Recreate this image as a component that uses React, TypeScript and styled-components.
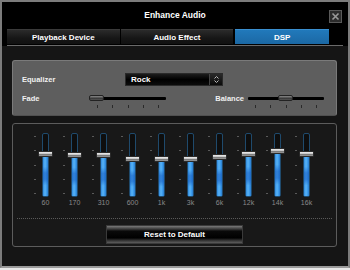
import React from "react";
import styled, { createGlobalStyle } from "styled-components";

const Global = createGlobalStyle`
  html, body { margin: 0; padding: 0; background: #e8e8e8; }
  body { font-family: "Liberation Sans", Arial, sans-serif; }
  * { box-sizing: border-box; }
`;

const Window = styled.div`
  width: 350px;
  height: 268px;
  background: #151515;
  border: 2px solid #7c7c7c;
  border-bottom-color: #9a9a9a;
  display: flex;
  flex-direction: column;
`;

const Header = styled.div`
  background: #000;
  padding: 0 5px 0 5px;
`;

const TitleBar = styled.div`
  height: 25px;
  position: relative;
  display: flex;
  align-items: center;
  justify-content: center;
  color: #fff;
  font-weight: bold;
  font-size: 8.5px;
`;

const CloseBtn = styled.div`
  position: absolute;
  right: 1px;
  top: 8px;
  width: 13px;
  height: 13px;
  background: #2c2c2c;
  border: 1px solid #5a5a5a;
  display: flex;
  align-items: center;
  justify-content: center;
`;

const Tabs = styled.div`
  display: flex;
  gap: 1px;
  padding-top: 2px;
  padding-bottom: 1px;
  padding-right: 14px;
  border-bottom: 1px solid #6a6a6a;
`;

const Tab = styled.div<{ $active?: boolean }>`
  width: ${(p) => (p.$active ? "94px" : "113px")};
  margin-left: ${(p) => (p.$active ? "1px" : "0")};
  height: 15px;
  display: flex;
  align-items: center;
  justify-content: center;
  color: #fff;
  font-weight: bold;
  font-size: 8px;
  background: ${(p) =>
    p.$active
      ? "linear-gradient(#2179bb, #1b68a4)"
      : "linear-gradient(#2b2b2b, #161616 60%, #111)"};
  border-top: 1px solid ${(p) => (p.$active ? "#3a8fd0" : "#3a3a3a")};
`;

const Body = styled.div`
  flex: 1;
  padding: 14px 11px 0 10px;
  display: flex;
  flex-direction: column;
  gap: 7px;
`;

const SettingsPanel = styled.div`
  height: 56px;
  background: #5e5e5e;
  border: 1px solid #7a7a7a;
  border-bottom-color: #505050;
  border-radius: 3px;
  padding: 12px 12px 0 9px;
  display: flex;
  flex-direction: column;
  gap: 6px;
`;

const Row = styled.div`
  display: flex;
  align-items: flex-start;
`;

const Label = styled.div<{ $w?: number }>`
  width: ${(p) => (p.$w ? `${p.$w}px` : "auto")};
  color: #f0f0f0;
  font-weight: bold;
  font-size: 7.5px;
  line-height: 13px;
  flex-shrink: 0;
`;

const Select = styled.div`
  width: 98px;
  height: 13px;
  display: flex;
  background: linear-gradient(#1c1c1c, #000 50%, #0c0c0c);
  border: 1px solid #2a2a2a;
`;

const SelectText = styled.div`
  flex: 1;
  color: #fff;
  font-weight: bold;
  font-size: 8px;
  line-height: 11px;
  padding-left: 5px;
`;

const SelectArrow = styled.div`
  width: 13px;
  border-left: 1px solid #444;
  display: flex;
  align-items: center;
  justify-content: center;
  background: linear-gradient(#2a2a2a, #0a0a0a);
`;

const Spacer = styled.div`
  flex: 1;
`;

const HSlider = styled.div`
  width: 76px;
  display: flex;
  flex-direction: column;
  padding-top: 5px;
`;

const HTrack = styled.div`
  height: 3px;
  background: #000;
  border-radius: 1px;
  position: relative;
`;

const HThumb = styled.div`
  position: absolute;
  top: -2px;
  width: 15px;
  height: 6px;
  border-radius: 2px;
  background: linear-gradient(#8a8a8a, #3a3a3a 60%, #555);
  border: 1px solid #222;
`;

const HTicks = styled.div`
  display: flex;
  justify-content: space-between;
  padding: 0 7px;
  margin-top: 5px;
`;

const HTick = styled.div`
  width: 1px;
  height: 3px;
  background: #2a2a2a;
`;

const EqPanel = styled.div`
  height: 124px;
  border: 1px solid #5c5c5c;
  border-radius: 3px;
  background: #181818;
  padding: 9px 3px 0 3px;
  display: flex;
  flex-direction: column;
  align-items: stretch;
`;

const Bands = styled.div`
  display: grid;
  grid-template-columns: repeat(10, 29px);
  padding-left: 15px;
`;

const Band = styled.div`
  display: flex;
  flex-direction: column;
  align-items: center;
`;

const SliderArea = styled.div`
  height: 64px;
  width: 29px;
  position: relative;
  display: flex;
  justify-content: center;
`;

const Ticks = styled.div`
  position: absolute;
  left: 3px;
  top: 3px;
  bottom: 3px;
  display: flex;
  flex-direction: column;
  justify-content: space-between;
`;

const Tick = styled.div`
  width: 2px;
  height: 1px;
  background: #5a5a5a;
`;

const VTrack = styled.div`
  width: 7px;
  height: 64px;
  background: #0e0e0e;
  border: 1px solid #1f4a6c;
  border-radius: 2px;
  position: relative;
  overflow: visible;
`;

const VFill = styled.div`
  position: absolute;
  left: 0;
  right: 0;
  bottom: 0;
  background:
    linear-gradient(to bottom, transparent 30%, rgba(20, 90, 190, 0.55) 45%, rgba(20, 90, 190, 0.55) 60%, transparent 75%),
    linear-gradient(to right, #2f8ae0, #5ab4f5 40%, #3d9ced 70%, #2a7ccc);
`;

const VThumb = styled.div`
  position: absolute;
  left: -5px;
  width: 15px;
  height: 6px;
  border-radius: 1px;
  background: linear-gradient(#f0f0f0, #c8c8c8 40%, #7a7a7a 60%, #9a9a9a);
  border: 1px solid #2a2a2a;
`;

const BandLabel = styled.div`
  color: #8a8a8a;
  font-size: 7px;
  line-height: 9px;
  margin-top: 1px;
`;

const Dotted = styled.div`
  margin: 11px 1px 0 1px;
  border-top: 1px dotted #5a5a5a;
`;

const ResetButton = styled.div`
  align-self: center;
  margin-top: 6px;
  width: 137px;
  height: 19px;
  display: flex;
  align-items: center;
  justify-content: center;
  color: #fff;
  font-weight: bold;
  font-size: 8px;
  border: 1px solid #3a3a3a;
  background: linear-gradient(
    #7a7a7a 0%,
    #3a3a3a 18%,
    #0a0a0a 30%,
    #000 70%,
    #2a2a2a 82%,
    #5e5e5e 100%
  );
`;

const bands: { label: string; pos: number }[] = [
  { label: "60", pos: 20 },
  { label: "170", pos: 21 },
  { label: "310", pos: 21 },
  { label: "600", pos: 25 },
  { label: "1k", pos: 25 },
  { label: "3k", pos: 25 },
  { label: "6k", pos: 23 },
  { label: "12k", pos: 20 },
  { label: "14k", pos: 17 },
  { label: "16k", pos: 20 },
];

const HSliderView: React.FC<{ thumb: number }> = ({ thumb }) => (
  <HSlider>
    <HTrack>
      <HThumb style={{ left: thumb }} />
    </HTrack>
    <HTicks>
      {[0, 1, 2, 3, 4].map((i) => (
        <HTick key={i} />
      ))}
    </HTicks>
  </HSlider>
);

export default function App() {
  return (
    <>
      <Global />
      <Window>
        <Header>
          <TitleBar>
            Enhance Audio
            <CloseBtn>
              <svg width="9" height="9" viewBox="0 0 9 9">
                <path d="M1.5 1.5 L7.5 7.5 M7.5 1.5 L1.5 7.5" stroke="#9a9a9a" strokeWidth="1.6" />
              </svg>
            </CloseBtn>
          </TitleBar>
          <Tabs>
            <Tab>Playback Device</Tab>
            <Tab>Audio Effect</Tab>
            <Tab $active>DSP</Tab>
          </Tabs>
        </Header>
        <Body>
          <SettingsPanel>
            <Row>
              <Label $w={103}>Equalizer</Label>
              <Select>
                <SelectText>Rock</SelectText>
                <SelectArrow>
                  <svg width="7" height="9" viewBox="0 0 7 9">
                    <path d="M1.5 3.5 L3.5 1.5 L5.5 3.5 M1.5 5.5 L3.5 7.5 L5.5 5.5" stroke="#bbb" strokeWidth="1" fill="none" />
                  </svg>
                </SelectArrow>
              </Select>
            </Row>
            <Row>
              <Label $w={68}>Fade</Label>
              <HSliderView thumb={-1} />
              <Spacer />
              <Label>Balance</Label>
              <Spacer style={{ flex: "0 0 4px" }} />
              <HSliderView thumb={30} />
            </Row>
          </SettingsPanel>
          <EqPanel>
            <Bands>
              {bands.map((b) => (
                <Band key={b.label}>
                  <SliderArea>
                    <Ticks>
                      {[0, 1, 2, 3, 4].map((i) => (
                        <Tick key={i} />
                      ))}
                    </Ticks>
                    <VTrack>
                      <VFill style={{ top: b.pos }} />
                      <VThumb style={{ top: b.pos - 3 }} />
                    </VTrack>
                  </SliderArea>
                  <BandLabel>{b.label}</BandLabel>
                </Band>
              ))}
            </Bands>
            <Dotted />
            <ResetButton>Reset to Default</ResetButton>
          </EqPanel>
        </Body>
      </Window>
    </>
  );
}
